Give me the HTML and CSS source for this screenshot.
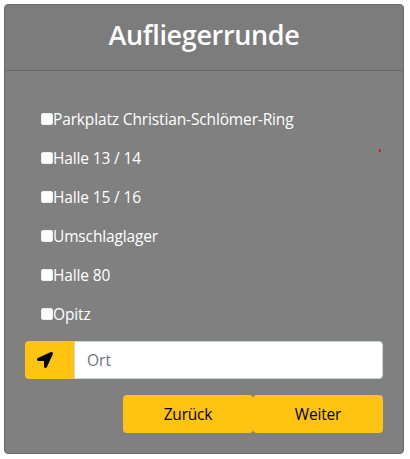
FILE: index.html
```html
<!doctype html>
<html lang="de">
	<head>
		<meta charset="UTF-8" />
		<meta name="viewport" content="width=device-width, initial-scale=1.0" />
		<title>Aufliegerrunde</title>
		<link rel="stylesheet" href="styles.css">
	</head>
	<body>
		<form class="card">
			<header class="card-header">
				<h1>Aufliegerrunde</h1>
			</header>

			<div class="card-body">
				<span class="marker"></span>

				<div class="stations">
					<label class="station"><input type="checkbox" />Parkplatz Christian-Schlömer-Ring</label>
					<label class="station"><input type="checkbox" />Halle 13 / 14</label>
					<label class="station"><input type="checkbox" />Halle 15 / 16</label>
					<label class="station"><input type="checkbox" />Umschlaglager</label>
					<label class="station"><input type="checkbox" />Halle 80</label>
					<label class="station"><input type="checkbox" />Opitz</label>
				</div>

				<div class="input-group">
					<span class="input-icon">
						<svg viewBox="0 0 512 512" width="16" height="16">
							<path d="M444.500 3.500L28.700 195.400c-48 22.400-32 92.700 19.200 92.700h175.900v175.900c0 51.200 70.300 67.200 92.700 19.200L508.400 67.500c16-38.400-25.500-80-63.900-64z" />
						</svg>
					</span>
					<input type="text" class="input" placeholder="Ort" />
				</div>

				<div class="buttons">
					<button type="button" class="btn">Zurück</button>
					<button type="button" class="btn">Weiter</button>
				</div>
			</div>
		</form>
	</body>
</html>
```
FILE: styles.css
```css
:root {
	--color-grey: #808080;
	--color-header: #7c7c7c;
	--color-border: #6a6a6a;
	--color-yellow: #ffc312;
}

* {
	box-sizing: border-box;
}

body {
	margin: 0;
	padding: 4px;

	background-color: #fff;
	color: #fff;

	font-family: 'Open Sans', 'Noto Sans', sans-serif;
	font-size: 15.5px;
	line-height: 24px;
	letter-spacing: -0.14px;
}

.card {
	width: 400px;
	height: 450px;
	border: 1px solid var(--color-border);
	border-radius: 4px;
	background-color: var(--color-grey);
}

.card-header {
	height: 66px;
	padding: 13px 20px;
	border-bottom: 1px solid var(--color-border);
	border-radius: 3px 3px 0 0;
	background-color: var(--color-header);
	text-align: center;
}

h1 {
	margin: 0;
	font-size: 27px;
	font-weight: 600;
	line-height: 34px;
	letter-spacing: -0.35px;
}

.card-body {
	position: relative;
	padding: 36px 20px 20px;
}

/* small red tick at the right edge */
.marker {
	position: absolute;
	top: 78px;
	right: 22px;
	width: 2px;
	height: 3px;
	background: linear-gradient(90deg, #dc0000 50%, #a05050 50%);
}

.stations {
	display: flex;
	flex-direction: column;
	gap: 15px;
	padding-left: 16px;
}

.station {
	display: flex;
	height: 24px;
}

.station input {
	appearance: none;
	flex: none;
	width: 12px;
	height: 12px;
	margin: 6px 0 0;
	border: 1px solid #f0f0f0;
	border-radius: 2px;
	background-color: #fff;
}

.input-group {
	display: flex;
	height: 38px;
	margin-top: 15px;
}

.input-icon {
	display: flex;
	align-items: center;
	width: 49px;
	padding-left: 12px;
	border-radius: 4px 0 0 4px;
	background-color: var(--color-yellow);
}

.input {
	flex: 1;
	min-width: 0;
	padding: 6px 12px;
	border: 1px solid #ced4da;
	border-radius: 0 4px 4px 0;
	background-color: #fff;
	font: inherit;
}

.input::placeholder {
	color: #6c757d;
	opacity: 1;
}

.buttons {
	display: flex;
	justify-content: flex-end;
	margin-top: 16px;
}

.btn {
	width: 130px;
	height: 38px;
	padding: 0;
	border: none;
	border-radius: 4px;
	background-color: var(--color-yellow);
	color: #000;
	font: inherit;
	letter-spacing: -0.2px;
}
```
